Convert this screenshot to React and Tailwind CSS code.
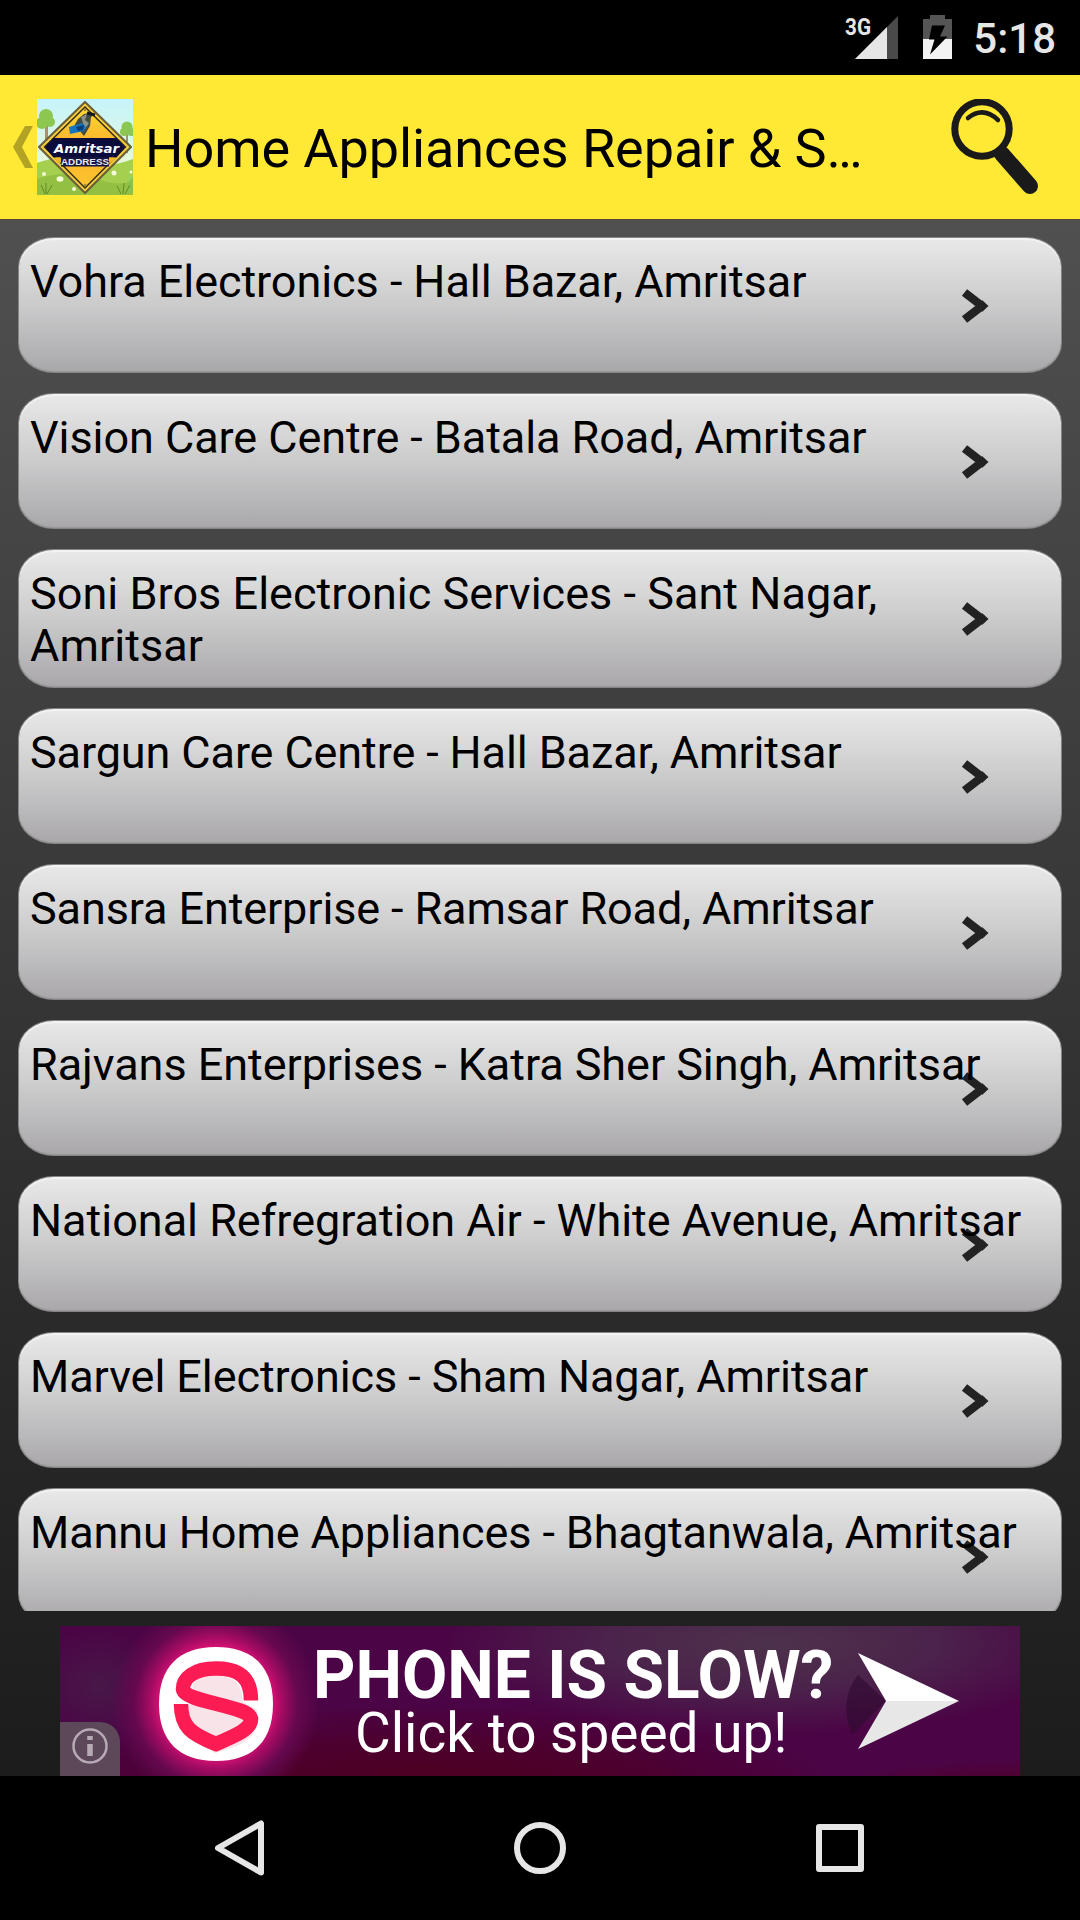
import React from "react";

const shops = [
  { name: "Vohra Electronics - Hall Bazar, Amritsar", tracking: "tracking-[-0.06px]" },
  { name: "Vision Care Centre - Batala Road, Amritsar", tracking: "tracking-[-0.07px]" },
  { name: "Soni Bros Electronic Services - Sant Nagar, Amritsar", tracking: "tracking-[0.03px]" },
  { name: "Sargun Care Centre - Hall Bazar, Amritsar", tracking: "tracking-[-0.11px]" },
  { name: "Sansra Enterprise - Ramsar Road, Amritsar", tracking: "tracking-[-0.12px]" },
  { name: "Rajvans Enterprises - Katra Sher Singh, Amritsar", tracking: "tracking-[-0.06px]" },
  { name: "National Refregration Air - White Avenue, Amritsar", tracking: "tracking-[-0.02px]" },
  { name: "Marvel Electronics - Sham Nagar, Amritsar", tracking: "tracking-[-0.08px]" },
  { name: "Mannu Home Appliances - Bhagtanwala, Amritsar", tracking: "tracking-[-0.1px]" },
];

function StatusBar() {
  return (
    <div className="flex h-[75px] shrink-0 items-start justify-end bg-black pr-[24px]">
      <svg className="h-[75px] w-[56px]" viewBox="844 0 56 75">
        <path d="M898 16V59H855Z" fill="#4a4a4a" />
        <path d="M887 27V59H855Z" fill="#e6e6e6" />
        <text x="845" y="35" fontFamily="Roboto" fontWeight="700" fontSize="24" textLength="26" lengthAdjust="spacingAndGlyphs" fill="#e6e6e6">3G</text>
      </svg>
      <svg className="ml-[23px] h-[75px] w-[29px]" viewBox="923 0 29 75">
        <path d="M930 15h15v4h7v20h-29V19h7z" fill="#555" />
        <path d="M923 39h29v20h-29z" fill="#f2f2f2" />
        <path d="M932 25.500h13l-5 11h7.500L930 54.500l4.500-15H929z" fill="#000" />
      </svg>
      <span className="ml-[21px] mt-[14px] text-[42px] leading-[50px] font-medium text-[#e6e6e6]">5:18</span>
    </div>
  );
}

function AppLogo() {
  return (
    <svg className="h-[96px] w-[96px]" viewBox="0 0 96 96">
      <defs>
        <linearGradient id="sky" x1="0" y1="0" x2="0" y2="1">
          <stop offset="0" stopColor="#c6f4fb" />
          <stop offset=".65" stopColor="#e6f8dc" />
        </linearGradient>
        <linearGradient id="sign" x1="0" y1="0" x2="0" y2="1">
          <stop offset="0" stopColor="#fdd835" />
          <stop offset=".5" stopColor="#fbb02a" />
          <stop offset="1" stopColor="#fdc62e" />
        </linearGradient>
      </defs>
      <rect width="96" height="96" fill="url(#sky)" />
      <path d="M0 64Q25 54 48 62T96 60V96H0Z" fill="#a5cf4f" />
      <path d="M0 80Q30 70 60 80T96 78V96H0Z" fill="#93bf42" />
      <path d="M8 26h3v28H8zM89 34h2v20h-2z" fill="#a3926a" />
      <g fill="#8cc751">
        <circle cx="9" cy="17" r="7" />
        <circle cx="5" cy="24" r="6" />
        <circle cx="13" cy="23" r="5" />
        <circle cx="90" cy="28" r="5.500" />
        <circle cx="87" cy="33" r="4" />
        <circle cx="94" cy="33" r="4" />
      </g>
      <g fill="#f4fbd6">
        <circle cx="7" cy="75" r="2" />
        <ellipse cx="23" cy="80" rx="3.500" ry="2.800" />
        <circle cx="77" cy="74" r="2.500" />
        <circle cx="37" cy="90" r="2" />
        <circle cx="94" cy="73" r="1.500" />
      </g>
      <path d="M8 95L4 86M9 95V84M10 95l5-9M84 95l-4-8M86 95l1-11M88 95l5-9" stroke="#5f8d27" strokeWidth="1" fill="none" />
      <path d="M48 3L94 48L48 94L2 48Z" fill="#f6d13c" stroke="#6d5f3a" strokeWidth="2.200" strokeLinejoin="round" />
      <path d="M48 8L88.500 48L48 89L7.500 48Z" fill="url(#sign)" stroke="#352b16" strokeWidth="1.500" />
      <path d="M16.500 39H79.500L88 48L79.500 58.500H16.500L8 48Z" fill="#0b0b3c" />
      <path d="M24 58h48v9.500H24z" fill="#151542" />
      <path d="M16.500 58.500h7v6.500zM79.500 58.500h-7v6.500z" fill="#f3b72c" />
      <path d="M36 29l5-9 6-5 7-1 4 1-4 3-1 9-6 10-4-5z" fill="#444b42" />
      <path d="M44 18l6-3-2 6 4 3-4 6z" fill="#8b9184" />
      <path d="M50 14l8 2" stroke="#14181c" strokeWidth="3" />
      <path d="M32 28l13-4 4 4-2 4-14 3z" fill="#1673bd" />
      <path d="M39 28l8-2-1 5-5 1z" fill="#083d76" />
      <circle cx="48" cy="11" r="1.300" fill="#a48b37" />
      <circle cx="48" cy="86" r="1.300" fill="#a48b37" />
      <text x="17" y="53.500" fontFamily="DejaVu Sans" fontStyle="italic" fontWeight="700" fontSize="13" textLength="65" lengthAdjust="spacingAndGlyphs" fill="#fff">Amritsar</text>
      <text x="24" y="65.500" fontFamily="Liberation Sans" fontWeight="700" fontSize="9.500" textLength="48" lengthAdjust="spacingAndGlyphs" fill="#e7e7ef">ADDRESS</text>
    </svg>
  );
}

function Header() {
  return (
    <header className="flex h-[145px] shrink-0 items-center border-b border-[#54472f] bg-[#ffe935]">
      <svg className="ml-[13px] h-[42px] w-[20px]" viewBox="0 0 20 42">
        <path d="M12 0h8L9 21l11 21h-8L0 21Z" fill="#b3a325" />
      </svg>
      <div className="ml-[4px]"><AppLogo /></div>
      <h1 className="ml-[12px] flex-1 whitespace-nowrap pt-[3px] text-[54px] leading-[64px] tracking-[-0.08px] text-black">
        Home Appliances Repair &amp; S…
      </h1>
      <svg className="mr-[40px] h-[96px] w-[90px]" viewBox="950 99 90 96" fill="none" stroke="#1a1a1a">
        <circle cx="982" cy="129" r="27.200" strokeWidth="7" />
        <path d="M968 118Q983 106 998 120" strokeWidth="4.500" strokeLinecap="round" />
        <path d="M1002 154L1030 186" strokeWidth="16" strokeLinecap="round" />
        <path d="M998 150l7 8" strokeWidth="13" />
      </svg>
    </header>
  );
}

function ShopRow({ name, tracking }) {
  return (
    <li className="relative min-h-[136px] shrink-0 rounded-[36px/30px] border border-[#858585] bg-linear-to-b from-[#e9e9e9] via-[#cbcbcc] to-[#a9a7aa] pt-[18px] pr-[8px] pb-[14px] pl-[11px] shadow-[inset_0_2px_1px_#f3f3f3,inset_0_-1px_1px_#99979a]">
      <svg className="absolute top-1/2 right-[70px] mt-[-17px] h-[36px] w-[31px]" viewBox="0 0 31 36">
        <path d="M4.500 4.500L22 18L4.500 31.500" fill="none" stroke="#222" strokeWidth="8.500" strokeLinejoin="bevel" />
        <path d="M22 12l6.500 6L22 24z" fill="#222" />
      </svg>
      <span className={`relative block text-[45px] leading-[52.700px] text-black ${tracking}`}>{name}</span>
    </li>
  );
}

function AdBanner() {
  return (
    <div className="relative mx-[60px] mt-[15px] h-[150px] shrink-0 overflow-hidden bg-[radial-gradient(ellipse_330px_90px_at_74%_12%,#4d324c,#4b234b_50%,transparent),radial-gradient(ellipse_420px_85px_at_38%_108%,#4e001c,#4c002d_50%,transparent),radial-gradient(ellipse_200px_35px_at_100%_112%,#51001f,transparent),radial-gradient(ellipse_70px_60px_at_4%_40%,#481848,transparent)] bg-[#4b0446]">
      <div className="flex h-full items-start bg-[radial-gradient(circle_at_156px_77px,#e01276_54px,#a50b63_66px,#65084f_82px,transparent_104px)]">
        <svg className="ml-[99px] mt-[20px] h-[116px] w-[116px]" viewBox="0 0 116 116">
          <path d="M57 1C94 1 114 21 114 58S94 115 57 115 0 95 0 58 20 1 57 1Z" fill="#fff" />
          <path d="M57 30c19 0 26 8 27 26l14 8v14c0 14-18 23-42 29L32 92 29 59l16-3c-16-11-18-26 12-26Z" fill="#f8e3e9" />
          <path d="M92 54.500C92 31 80 22.500 57 22.500 35 22.500 24 32 24 43 24 56 92 60 92 73c0 10-14 16-35 25C32 88 22 81 22 58" fill="none" stroke="#fc1c53" strokeWidth="14.500" />
        </svg>
        <div className="ml-[38px] w-[511px] shrink-0 whitespace-nowrap text-white">
          <p className="mt-[17px] origin-left scale-x-[0.983] text-[67px] leading-[64px] font-bold">PHONE IS SLOW?</p>
          <p className="ml-[42px] origin-left scale-x-[0.981] text-[56px] leading-[52px]">Click to speed up!</p>
        </div>
        <svg className="mt-[20px] h-[110px] w-[136px] shrink-0" viewBox="824 1646 136 110">
          <path d="M858 1675Q838 1700 852 1735L886 1701Z" fill="#300b30" opacity=".65" />
          <path d="M858 1653L959 1701H886Z" fill="#fff" />
          <path d="M886 1701H959L858 1749Z" fill="#e7e7e7" />
        </svg>
      </div>
      <div className="absolute bottom-0 left-0 flex h-[54px] w-[60px] items-start justify-center rounded-tr-[20px] bg-[#5d4859] pt-[6px]">
        <svg className="h-[36px] w-[36px]" viewBox="0 0 36 36" fill="none" stroke="#b8aab5">
          <circle cx="18" cy="18" r="16.500" strokeWidth="2.500" />
          <path d="M18 16v12M18 8v4" strokeWidth="5.500" />
        </svg>
      </div>
    </div>
  );
}

function NavBar() {
  return (
    <nav className="flex h-[144px] shrink-0 items-center justify-between bg-black px-[210px]">
      <svg className="h-[60px] w-[60px]" viewBox="210 1818 60 60" fill="none" stroke="#e6e6e6" strokeWidth="6" strokeLinejoin="round">
        <path d="M261 1823.500V1872.500L218 1848Z" />
      </svg>
      <svg className="h-[60px] w-[60px]" viewBox="0 0 60 60" fill="none" stroke="#e6e6e6" strokeWidth="6">
        <circle cx="30" cy="30" r="23" />
      </svg>
      <svg className="h-[60px] w-[60px]" viewBox="0 0 60 60" fill="none" stroke="#e6e6e6" strokeWidth="6" strokeLinejoin="round">
        <path d="M9 9h42v42H9z" />
      </svg>
    </nav>
  );
}

export default function App() {
  return (
    <div className="flex h-[1920px] w-[1080px] flex-col overflow-hidden bg-black font-['Roboto',sans-serif]">
      <StatusBar />
      <Header />
      <main className="flex min-h-0 flex-1 flex-col bg-linear-to-b from-[#505050] to-[#1c1c1c]">
        <ul className="flex h-[1391px] shrink-0 flex-col gap-[20px] overflow-hidden px-[18px] pt-[16.600px]">
          {shops.map((shop) => (
            <ShopRow key={shop.name} {...shop} />
          ))}
        </ul>
        <AdBanner />
      </main>
      <NavBar />
    </div>
  );
}
